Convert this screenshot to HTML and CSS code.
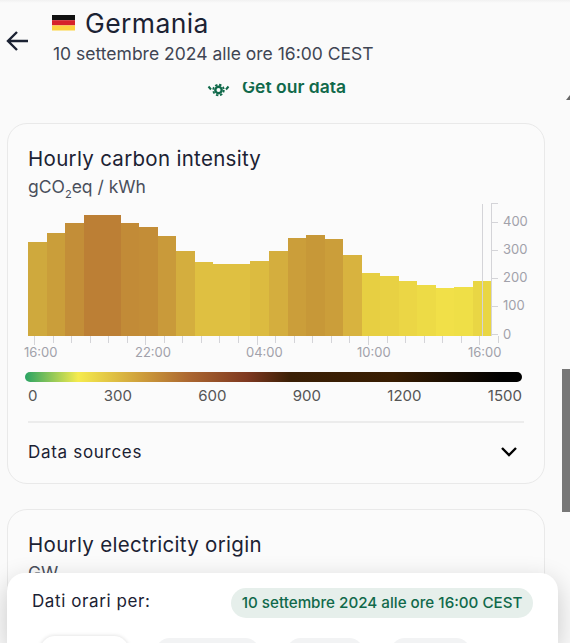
FILE: index.html
```html
<!DOCTYPE html>
<html lang="it">
<head>
<meta charset="utf-8">
<title>Germania</title>
<link rel="stylesheet" href="styles.css">
</head>
<body>
<div class="topline"></div>
<header class="head">
  <svg class="back" viewBox="0 0 22 20" width="22" height="20"><path d="M22 10H3M11 1l-9 9 9 9" fill="none" stroke="#1b2233" stroke-width="2.4"/></svg>
  <div class="head-text">
    <div class="title-row">
      <svg class="flag" viewBox="0 0 23 15.500" width="23" height="15.500"><rect width="23" height="5.200" fill="#111"/><rect y="5.200" width="23" height="5.200" fill="#d6232a"/><rect y="10.400" width="23" height="5.100" fill="#fcd33f"/></svg>
      <span class="title">Germania</span>
    </div>
    <div class="subtitle">10 settembre 2024 alle ore 16:00 CEST</div>
  </div>
</header>
<div class="getdata">
  <div class="getdata-inner">
    <svg class="getdata-icon" viewBox="0 0 24 24" width="24" height="24"><circle cx="11.500" cy="12" r="3.200" fill="none" stroke="#10694a" stroke-width="2.400"/><circle cx="11.500" cy="12" r="5.300" fill="none" stroke="#10694a" stroke-width="1.800" stroke-dasharray="2.400 1.760"/><path d="M1.500 8.500l2.500 3M21.500 8.500l-2.500 3" stroke="#10694a" stroke-width="2" fill="none"/></svg>
    <span>Get our data</span>
  </div>
</div>
<main class="content">
  <section class="card">
    <h2 class="card-title">Hourly carbon intensity</h2>
    <div class="card-unit">gCO<sub>2</sub>eq / kWh</div>
    <div class="chart">
      <svg viewBox="0 0 500 162" width="500" height="162">
        <g shape-rendering="crispEdges">
          <rect x="0" y="41" width="19" height="94" fill="#cfa93d"/>
          <rect x="19" y="32" width="18" height="103" fill="#ca9e3a"/>
          <rect x="37" y="22" width="19" height="113" fill="#c38e38"/>
          <rect x="56" y="14" width="37" height="121" fill="#bc7f35"/>
          <rect x="93" y="22" width="18" height="113" fill="#c28b37"/>
          <rect x="111" y="26" width="19" height="109" fill="#c38d37"/>
          <rect x="130" y="35" width="18" height="100" fill="#c99a3a"/>
          <rect x="148" y="50" width="19" height="85" fill="#d4ae3e"/>
          <rect x="167" y="61" width="18" height="74" fill="#dfc041"/>
          <rect x="185" y="63" width="19" height="72" fill="#dfc041"/>
          <rect x="204" y="63" width="18" height="72" fill="#dfc041"/>
          <rect x="222" y="60" width="19" height="75" fill="#dcbb40"/>
          <rect x="241" y="50" width="19" height="85" fill="#d4ae3e"/>
          <rect x="260" y="37" width="18" height="98" fill="#cb9e3a"/>
          <rect x="278" y="34" width="19" height="101" fill="#c79838"/>
          <rect x="297" y="38" width="18" height="97" fill="#cb9e3a"/>
          <rect x="315" y="54" width="19" height="81" fill="#d8b33f"/>
          <rect x="334" y="72" width="18" height="63" fill="#e7cf42"/>
          <rect x="352" y="75" width="19" height="60" fill="#e8d143"/>
          <rect x="371" y="80" width="18" height="55" fill="#ebd645"/>
          <rect x="389" y="84" width="19" height="51" fill="#eddb46"/>
          <rect x="408" y="87" width="18" height="48" fill="#f1e048"/>
          <rect x="426" y="86" width="19" height="49" fill="#efdf47"/>
          <rect x="445" y="80" width="18" height="55" fill="#e9d644"/>
        </g>
        <g class="ticks" shape-rendering="crispEdges">
          <path d="M6 135v9M25 135v7M43 135v7M62 135v7M80 135v7M99 135v7M117 135v9M136 135v7M154 135v7M173 135v7M191 135v7M210 135v7M229 135v9M247 135v7M266 135v7M284 135v7M303 135v7M321 135v7M340 135v9M359 135v7M377 135v7M396 135v7M414 135v7M433 135v7M451 135v9M470 135v7"/>
          <path d="M463 2h7M463 21h7M463 49h7M463 77h7M463 105h7M463 133h7"/>
          <path d="M463 2v133"/>
          <path d="M454 3v132"/>
        </g>
        <g class="y-labels">
          <text x="475" y="25">400</text>
          <text x="475" y="53">300</text>
          <text x="475" y="81">200</text>
          <text x="475" y="109">100</text>
          <text x="475" y="138">0</text>
        </g>
        <g class="x-labels">
          <text x="-4" y="156">16:00</text>
          <text x="107" y="156">22:00</text>
          <text x="218" y="156">04:00</text>
          <text x="329" y="156">10:00</text>
          <text x="440" y="156">16:00</text>
        </g>
      </svg>
    </div>
    <div class="legend">
      <div class="legend-bar"></div>
      <div class="legend-labels"><span>0</span><span>300</span><span>600</span><span>900</span><span>1200</span><span>1500</span></div>
    </div>
    <div class="sources">
      <span>Data sources</span>
      <svg viewBox="0 0 18 12" width="18" height="12"><path d="M2 2l7 7 7-7" fill="none" stroke="#000" stroke-width="2.400"/></svg>
    </div>
  </section>
  <section class="card card-second">
    <h2 class="card-title">Hourly electricity origin</h2>
    <div class="card-unit">GW</div>
  </section>
</main>
<svg class="scroll-arrow" viewBox="0 0 4 5" width="4" height="5"><path d="M0 5L4 0v5z" fill="#666"/></svg>
<div class="scroll-thumb"></div>
<div class="time-panel">
  <div class="time-row">
    <span class="time-label">Dati orari per:</span>
    <span class="time-badge">10 settembre 2024 alle ore 16:00 CEST</span>
  </div>
  <div class="pills">
    <span class="pill pill-active"></span>
    <span class="pill pill-b"></span>
    <span class="pill pill-c"></span>
    <span class="pill pill-d"></span>
  </div>
</div>
</body>
</html>
```
FILE: styles.css
```css
* { box-sizing: border-box; }
html, body { margin: 0; height: 643px; overflow: hidden; }
body { background: #fafafa; font-family: "Inter", "Liberation Sans", sans-serif; color: #1b2233; position: relative; }
.topline { height: 3px; background: linear-gradient(#f1f1f1, #fafafa); }
.head { display: flex; align-items: flex-start; gap: 25px; padding: 6px 0 0 6px; height: 79px; }
.back { margin-top: 22px; flex: none; }
.head-text { display: flex; flex-direction: column; }
.title-row { display: flex; align-items: center; gap: 10px; height: 28px; margin-left: -1px; }
.flag { flex: none; }
.title { font-size: 26.500px; font-weight: 400; letter-spacing: .4px; }
.subtitle { font-size: 17.500px; color: #3f4553; margin-top: 6px; white-space: nowrap; line-height: 22px; }
.getdata { height: 17px; overflow: hidden; }
.getdata-inner { display: flex; justify-content: center; align-items: center; gap: 11px; color: #10694a; font-weight: 600; font-size: 17.500px; margin-top: -9px; padding-right: 17px; height: 26px; }
.getdata-icon { margin-top: 7px; flex: none; }
.content { padding: 24px 25px 0 7px; }
.card { border: 1px solid #e9e9e9; border-radius: 20px; height: 361px; padding: 22px 20px 0; background: #fbfbfb; }
.card-second { margin-top: 25px; }
.card-title { margin: 0; font-weight: 400; font-size: 20.500px; line-height: 26px; letter-spacing: .3px; }
.card-unit { font-size: 17.500px; color: #4a4f5b; line-height: 22px; margin-top: 4px; }
.card-unit sub { font-size: 11px; line-height: 0; }
.chart { margin-top: 3px; height: 162px; }
.chart svg { display: block; overflow: visible; }
.ticks path { stroke: #d4d4d8; stroke-width: 1; fill: none; }
.y-labels text, .x-labels text { font-size: 13px; fill: #a1a1aa; }
.legend { margin: 9px 2px 0 -3px; }
.legend-bar { height: 10px; border-radius: 5px; background: linear-gradient(90deg, #2aa364 0%, #f5eb4d 10.700%, #cc9a3a 24%, #ab6630 33%, #7e3820 44.700%, #3a1f05 53.500%, #381d02 74%, #000 96%); }
.legend-labels { display: flex; justify-content: space-between; padding: 0 0 0 3px; margin-top: 4px; font-size: 15px; color: #555; line-height: 20px; }
.sources { display: flex; justify-content: space-between; align-items: center; border-top: 2px solid #ececec; margin-top: 15px; height: 60px; padding-right: 6px; font-weight: 400; font-size: 17px; letter-spacing: .7px; width: 496px; }
.scroll-arrow { position: absolute; left: 566px; top: 95px; }
.scroll-thumb { position: absolute; left: 562px; top: 369px; width: 8px; height: 143px; background: #777; }
.time-panel { position: absolute; left: 7px; top: 573px; width: 551px; height: 70px; overflow: hidden; background: #fff; border-radius: 18px 18px 0 0; box-shadow: 0 8px 26px rgba(0,0,0,.2); padding: 15px 25px 0 25px; }
.time-row { display: flex; justify-content: space-between; align-items: flex-start; height: 30px; }
.time-label { font-size: 17px; font-weight: 400; line-height: 26px; letter-spacing: .6px; }
.time-badge { background: #e6efeb; color: #10694a; font-size: 15.200px; font-weight: 500; padding: 0 10.500px; height: 30px; line-height: 30px; border-radius: 15px; white-space: nowrap; }
.pills { display: flex; gap: 26px; margin-top: 20px; padding-left: 8px; }
.pill { height: 30px; border-radius: 15px; background: #f2f3f4; }
.pill-active { width: 89px; background: #fff; margin-top: -2px; box-shadow: 0 0 4px rgba(0,0,0,.15); }
.pill-b { width: 105px; }
.pill-c { width: 78px; }
.pill-d { width: 81px; }
```
